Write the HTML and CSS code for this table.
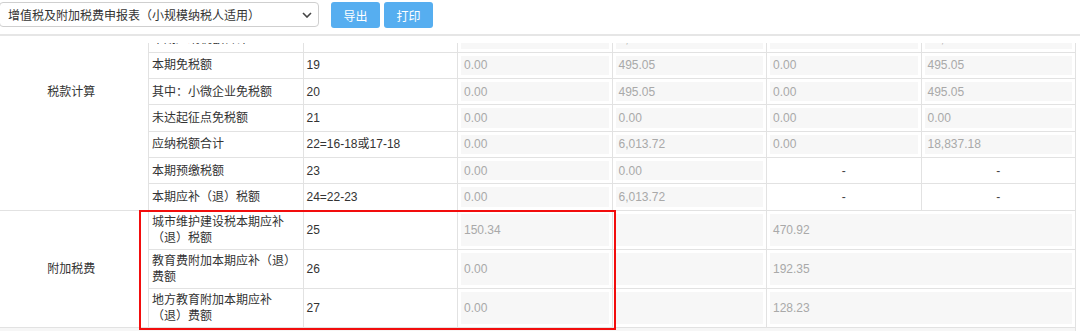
FILE: index.html
```html
<!DOCTYPE html>
<html lang="zh-CN">
<head>
<meta charset="utf-8">
<title>增值税及附加税费申报表</title>
<link rel="stylesheet" href="styles.css">
</head>
<body>
<div class="toolbar">
  <div class="select">
    <span>增值税及附加税费申报表（小规模纳税人适用）</span>
    <svg class="chev" width="10" height="6" viewBox="0 0 10 6"><path d="M1 1 L5 5 L9 1" fill="none" stroke="#444" stroke-width="1.6"/></svg>
  </div>
  <button class="btn btn-first">导出</button>
  <button class="btn">打印</button>
</div>
<div class="divider"></div>
<div class="sheet">
  <table class="grid">
    <colgroup><col><col><col><col><col><col><col></colgroup>
    <tbody>
      <tr>
        <td class="group" rowspan="9">税款计算</td>
        <td class="name">本期应纳税额</td><td class="no">16</td>
        <td class="val"><div class="inp">0.00</div></td><td class="val"><div class="inp">6,508.77</div></td>
        <td class="val"><div class="inp">0.00</div></td><td class="val"><div class="inp">19,332.23</div></td>
      </tr>
      <tr>
        <td class="name">本期应纳税额减征额</td><td class="no">17</td>
        <td class="val"><div class="inp">0.00</div></td><td class="val"><div class="inp">0.00</div></td>
        <td class="val"><div class="inp">0.00</div></td><td class="val"><div class="inp">0.00</div></td>
      </tr>
      <tr>
        <td class="name">本期应纳税额合计</td><td class="no">18</td>
        <td class="val"><div class="inp">0.00</div></td><td class="val"><div class="inp">6,508.77</div></td>
        <td class="val"><div class="inp">0.00</div></td><td class="val"><div class="inp">19,332.23</div></td>
      </tr>
      <tr>
        <td class="name">本期免税额</td><td class="no">19</td>
        <td class="val"><div class="inp">0.00</div></td><td class="val"><div class="inp">495.05</div></td>
        <td class="val"><div class="inp">0.00</div></td><td class="val"><div class="inp">495.05</div></td>
      </tr>
      <tr>
        <td class="name">其中：小微企业免税额</td><td class="no">20</td>
        <td class="val"><div class="inp">0.00</div></td><td class="val"><div class="inp">495.05</div></td>
        <td class="val"><div class="inp">0.00</div></td><td class="val"><div class="inp">495.05</div></td>
      </tr>
      <tr>
        <td class="name">未达起征点免税额</td><td class="no">21</td>
        <td class="val"><div class="inp">0.00</div></td><td class="val"><div class="inp">0.00</div></td>
        <td class="val"><div class="inp">0.00</div></td><td class="val"><div class="inp">0.00</div></td>
      </tr>
      <tr>
        <td class="name">应纳税额合计</td><td class="no">22=16-18或17-18</td>
        <td class="val"><div class="inp">0.00</div></td><td class="val"><div class="inp">6,013.72</div></td>
        <td class="val"><div class="inp">0.00</div></td><td class="val"><div class="inp">18,837.18</div></td>
      </tr>
      <tr>
        <td class="name">本期预缴税额</td><td class="no">23</td>
        <td class="val"><div class="inp">0.00</div></td><td class="val"><div class="inp">0.00</div></td>
        <td class="dash">-</td><td class="dash">-</td>
      </tr>
      <tr>
        <td class="name">本期应补（退）税额</td><td class="no">24=22-23</td>
        <td class="val"><div class="inp">0.00</div></td><td class="val"><div class="inp">6,013.72</div></td>
        <td class="dash">-</td><td class="dash">-</td>
      </tr>
      <tr>
        <td class="group" rowspan="3">附加税费</td>
        <td class="name">城市维护建设税本期应补（退）税额</td><td class="no">25</td>
        <td class="val"><div class="inp tall">150.34</div></td><td class="val"><div class="inp tall"></div></td>
        <td class="val" colspan="2"><div class="inp tall">470.92</div></td>
      </tr>
      <tr>
        <td class="name">教育费附加本期应补（退）费额</td><td class="no">26</td>
        <td class="val"><div class="inp tall">0.00</div></td><td class="val"><div class="inp tall"></div></td>
        <td class="val" colspan="2"><div class="inp tall">192.35</div></td>
      </tr>
      <tr>
        <td class="name">地方教育附加本期应补（退）费额</td><td class="no">27</td>
        <td class="val"><div class="inp tall">0.00</div></td><td class="val"><div class="inp tall"></div></td>
        <td class="val" colspan="2"><div class="inp tall">128.23</div></td>
      </tr>
      <tr class="foot"><td colspan="7"></td></tr>
    </tbody>
  </table>
  <div class="mark"></div>
</div>
</body>
</html>
```
FILE: styles.css
```css
html, body {
  margin: 0;
  padding: 0;
}
body {
  width: 1080px;
  height: 331px;
  overflow: hidden;
  background: #fff;
  color: #333;
  font-family: "Liberation Sans", "Noto Sans CJK SC", sans-serif;
  font-size: 12px;
}
.toolbar {
  box-sizing: border-box;
  height: 33.5px;
  padding-top: 2px;
  display: flex;
  align-items: flex-start;
}
.select {
  box-sizing: border-box;
  margin-left: -1px;
  width: 320px;
  height: 25px;
  border: 1px solid #cfcfcf;
  border-radius: 4px;
  background: #fff;
  display: flex;
  align-items: center;
  justify-content: space-between;
  padding: 0 6px 0 8px;
  color: #333;
}
.chev {
  display: block;
}
.btn {
  width: 49px;
  height: 26px;
  border: 0;
  border-radius: 3px;
  background: #56aef0;
  color: #fff;
  font-family: inherit;
  font-size: 12px;
  padding: 0;
  margin-left: 4px;
}
.btn-first {
  margin-left: 12px;
}
.divider {
  height: 2px;
  background: #e6e6e6;
}
.sheet {
  position: relative;
  margin-top: 7.5px;
  height: 288px;
  overflow: hidden;
}
.grid {
  border-collapse: collapse;
  table-layout: fixed;
  width: 1081.5px;
  margin-left: -6.5px;
  margin-top: -70.3px;
}
.grid col {
  width: 154.5px;
}
.grid td {
  border: 1px solid #e2e2e2;
  padding: 3px;
  line-height: 16px;
  vertical-align: middle;
}
.group {
  text-align: center;
}
.name {
  padding-left: 3px;
}
.no {
  padding-left: 3px;
}
.inp {
  box-sizing: border-box;
  height: 19.33px;
  background: #f7f7f7;
  color: #a9a9a9;
  padding-left: 3px;
  display: flex;
  align-items: center;
}
.inp.tall {
  height: 32px;
}
.dash {
  text-align: center;
  color: #444;
}
.foot td {
  height: 14px;
  background: #f6f6f6;
}
.mark {
  position: absolute;
  box-sizing: border-box;
  top: 167px;
  left: 139px;
  width: 477px;
  height: 120px;
  border: 2px solid #f20d0d;
}
```
